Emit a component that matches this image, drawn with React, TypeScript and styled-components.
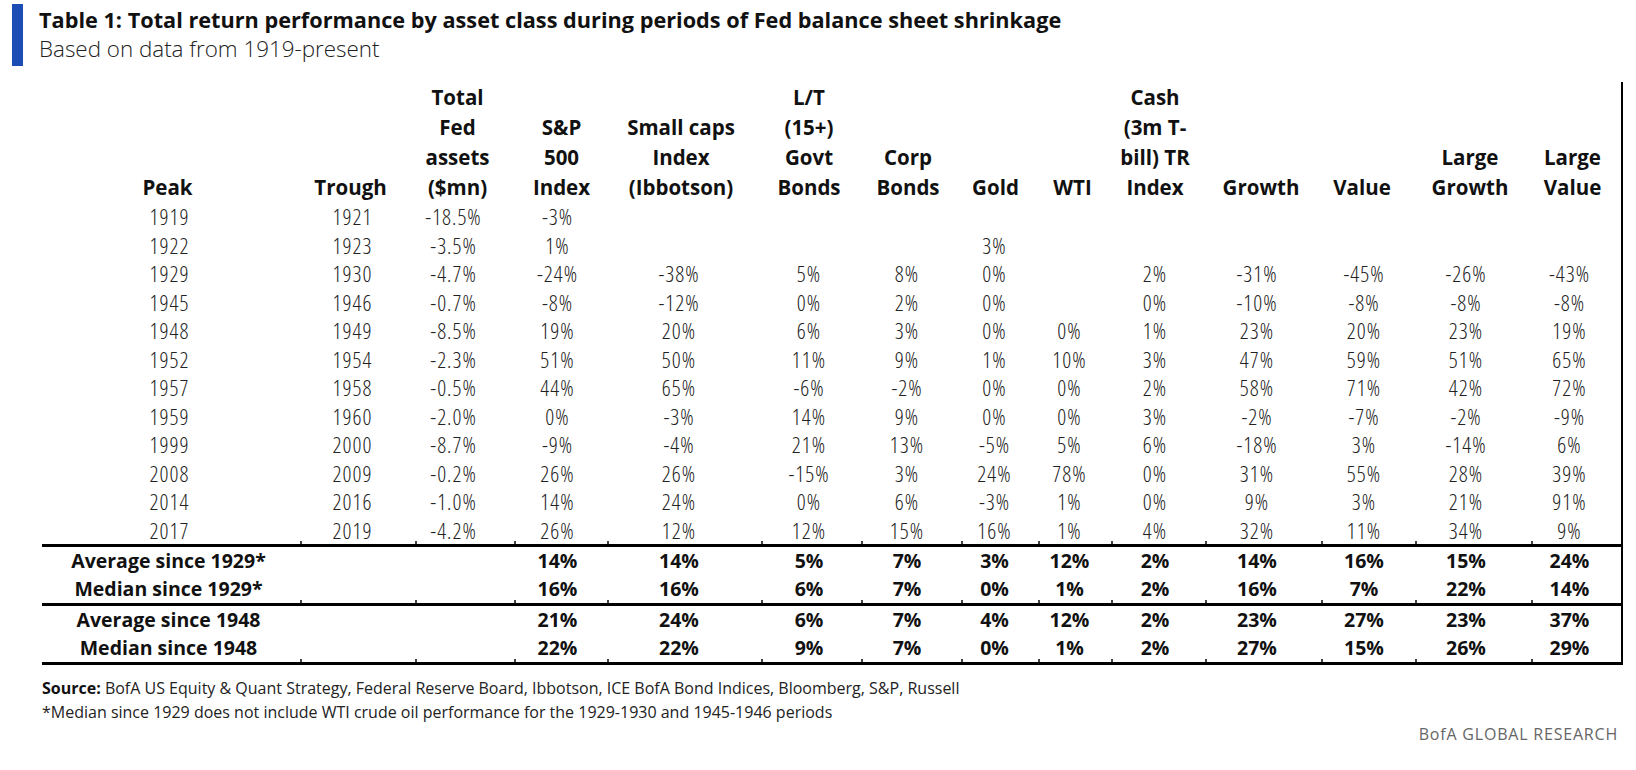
import React from "react";
import styled, { createGlobalStyle } from "styled-components";

// Open Sans comes in discrete widths here: condensed, semi-condensed and normal
const COND = "75%";
const SEMI = "90%";

const GlobalStyle = createGlobalStyle`
  body {
    margin: 0;
    background: #fff;
    font-family: "Open Sans", "Noto Sans", sans-serif;
    font-stretch: ${COND};
    color: #1b1b1b;
  }
`;

// column widths come from the little ticks on the rules
const COLS = [259, 115, 99, 93, 154, 100, 100, 77, 73, 94, 116, 94, 116, 91];
const VALUE_SHIFT = [-2, -6, -12, -4, -6, -3, -5, -6, -6, -4, -7, -5, -8, -8];
const HEAD_SHIFT = [-4, -8, -8, 0, -4, -3, -4, -5, -3, -4, -3, -7, -4, -5];

const HEADERS = [
  ["Peak"],
  ["Trough"],
  ["Total", "Fed", "assets", "($mn)"],
  ["S&P", "500", "Index"],
  ["Small caps", "Index", "(Ibbotson)"],
  ["L/T", "(15+)", "Govt", "Bonds"],
  ["Corp", "Bonds"],
  ["Gold"],
  ["WTI"],
  ["Cash", "(3m T-", "bill) TR", "Index"],
  ["Growth"],
  ["Value"],
  ["Large", "Growth"],
  ["Large", "Value"],
];

const ROWS = [
  ["1919", "1921", "-18.5%", "-3%", "", "", "", "", "", "", "", "", "", ""],
  ["1922", "1923", "-3.5%", "1%", "", "", "", "3%", "", "", "", "", "", ""],
  ["1929", "1930", "-4.7%", "-24%", "-38%", "5%", "8%", "0%", "", "2%", "-31%", "-45%", "-26%", "-43%"],
  ["1945", "1946", "-0.7%", "-8%", "-12%", "0%", "2%", "0%", "", "0%", "-10%", "-8%", "-8%", "-8%"],
  ["1948", "1949", "-8.5%", "19%", "20%", "6%", "3%", "0%", "0%", "1%", "23%", "20%", "23%", "19%"],
  ["1952", "1954", "-2.3%", "51%", "50%", "11%", "9%", "1%", "10%", "3%", "47%", "59%", "51%", "65%"],
  ["1957", "1958", "-0.5%", "44%", "65%", "-6%", "-2%", "0%", "0%", "2%", "58%", "71%", "42%", "72%"],
  ["1959", "1960", "-2.0%", "0%", "-3%", "14%", "9%", "0%", "0%", "3%", "-2%", "-7%", "-2%", "-9%"],
  ["1999", "2000", "-8.7%", "-9%", "-4%", "21%", "13%", "-5%", "5%", "6%", "-18%", "3%", "-14%", "6%"],
  ["2008", "2009", "-0.2%", "26%", "26%", "-15%", "3%", "24%", "78%", "0%", "31%", "55%", "28%", "39%"],
  ["2014", "2016", "-1.0%", "14%", "24%", "0%", "6%", "-3%", "1%", "0%", "9%", "3%", "21%", "91%"],
  ["2017", "2019", "-4.2%", "26%", "12%", "12%", "15%", "16%", "1%", "4%", "32%", "11%", "34%", "9%"],
];

const SUMMARY = [
  [
    ["Average since 1929*", "", "", "14%", "14%", "5%", "7%", "3%", "12%", "2%", "14%", "16%", "15%", "24%"],
    ["Median since 1929*", "", "", "16%", "16%", "6%", "7%", "0%", "1%", "2%", "16%", "7%", "22%", "14%"],
  ],
  [
    ["Average since 1948", "", "", "21%", "24%", "6%", "7%", "4%", "12%", "2%", "23%", "27%", "23%", "37%"],
    ["Median since 1948", "", "", "22%", "22%", "9%", "7%", "0%", "1%", "2%", "27%", "15%", "26%", "29%"],
  ],
];

const Page = styled.div`
  width: 1636px;
  height: 770px;
  overflow: hidden;
`;

const TitleBlock = styled.div`
  display: flex;
  padding: 4px 0 0 12px;
`;

const Bar = styled.div`
  width: 11px;
  height: 62px;
  background: #1b4db4;
  flex-shrink: 0;
`;

const Titles = styled.div`
  padding: 1px 0 0 16px;
`;

const Title = styled.div`
  font-size: 21.7px;
  line-height: 30px;
  font-weight: 700;
  font-stretch: ${SEMI};
  color: #111;
`;

const Subtitle = styled.div`
  font-size: 22.4px;
  line-height: 28px;
  font-weight: 300;
  font-stretch: 100%;
  color: #222;
`;

const Table = styled.div`
  margin: 16px 0 0 42px;
  width: 1581px;
  border-right: 2px solid #000;
  box-sizing: border-box;
`;

const Row = styled.div<{ $height: number }>`
  display: grid;
  grid-template-columns: ${COLS.map((c) => c + "px").join(" ")};
  height: ${(p) => p.$height}px;
`;

const Cell = styled.div<{ $shift: number; $bold?: boolean }>`
  display: flex;
  align-items: center;
  justify-content: center;
  white-space: nowrap;
  line-height: 1.2;
  padding-left: ${(p) => Math.max(0, p.$shift * 2)}px;
  padding-right: ${(p) => Math.max(0, -p.$shift * 2)}px;
  font-size: ${(p) => (p.$bold ? 19.5 : 22)}px;
  letter-spacing: ${(p) => (p.$bold ? 0 : 1)}px;
  font-stretch: ${(p) => (p.$bold ? SEMI : COND)};
  font-weight: ${(p) => (p.$bold ? 700 : 300)};
  color: ${(p) => (p.$bold ? "#111" : "#222")};
`;

const HeadCell = styled(Cell)`
  align-items: flex-end;
  font-size: 20.5px;
  letter-spacing: 0;
  font-weight: 700;
  font-stretch: ${SEMI};
  color: #111;
`;

const HeadText = styled.span`
  text-align: center;
  line-height: 30px;
`;

const Rule = styled.div`
  display: grid;
  grid-template-columns: ${COLS.map((c) => c + "px").join(" ")};
  height: 3px;
  background: #000;
`;

const Tick = styled.div<{ $first: boolean }>`
  position: relative;
  &::before {
    content: "";
    display: ${(p) => (p.$first ? "none" : "block")};
    position: absolute;
    left: -1px;
    top: -3px;
    width: 2px;
    height: 3px;
    background: #444;
  }
`;

const Footer = styled.div`
  margin: 11px 0 0 42px;
  font-size: 16px;
  line-height: 24px;
  font-weight: 400;
  font-stretch: ${SEMI};
  color: #222;
`;

const SourceLabel = styled.span`
  font-weight: 700;
  color: #111;
`;

const Brand = styled.div`
  text-align: right;
  padding-right: 18px;
  font-size: 16px;
  line-height: 20px;
  letter-spacing: 0.8px;
  font-weight: 400;
  font-stretch: ${SEMI};
  color: #666;
`;

const RuleLine = () => (
  <Rule>
    {COLS.map((_, i) => (
      <Tick key={i} $first={i === 0} />
    ))}
  </Rule>
);

const App = () => {
  return (
    <Page>
      <GlobalStyle />
      <TitleBlock>
        <Bar />
        <Titles>
          <Title>
            Table 1: Total return performance by asset class during periods of Fed balance sheet shrinkage
          </Title>
          <Subtitle>Based on data from 1919-present</Subtitle>
        </Titles>
      </TitleBlock>

      <Table>
        <Row $height={120}>
          {HEADERS.map((lines, i) => (
            <HeadCell key={i} $shift={HEAD_SHIFT[i]}>
              <HeadText>
                {lines.map((l, j) => (
                  <React.Fragment key={j}>
                    {j > 0 && <br />}
                    {l}
                  </React.Fragment>
                ))}
              </HeadText>
            </HeadCell>
          ))}
        </Row>

        {ROWS.map((row, r) => (
          <Row key={r} $height={28.5}>
            {row.map((v, i) => (
              <Cell key={i} $shift={VALUE_SHIFT[i]}>
                {v}
              </Cell>
            ))}
          </Row>
        ))}

        {SUMMARY.map((group, g) => (
          <React.Fragment key={g}>
            <RuleLine />
            {group.map((row, r) => (
              <Row key={r} $height={28}>
                {row.map((v, i) => (
                  <Cell key={i} $shift={i === 0 ? -3 : VALUE_SHIFT[i]} $bold>
                    {v}
                  </Cell>
                ))}
              </Row>
            ))}
          </React.Fragment>
        ))}
        <RuleLine />
      </Table>

      <Footer>
        <div>
          <SourceLabel>Source:</SourceLabel> BofA US Equity &amp; Quant Strategy, Federal Reserve Board, Ibbotson, ICE BofA
          Bond Indices, Bloomberg, S&amp;P, Russell
        </div>
        <div>*Median since 1929 does not include WTI crude oil performance for the 1929-1930 and 1945-1946 periods</div>
      </Footer>
      <Brand>BofA GLOBAL RESEARCH</Brand>
    </Page>
  );
};

export default App;
